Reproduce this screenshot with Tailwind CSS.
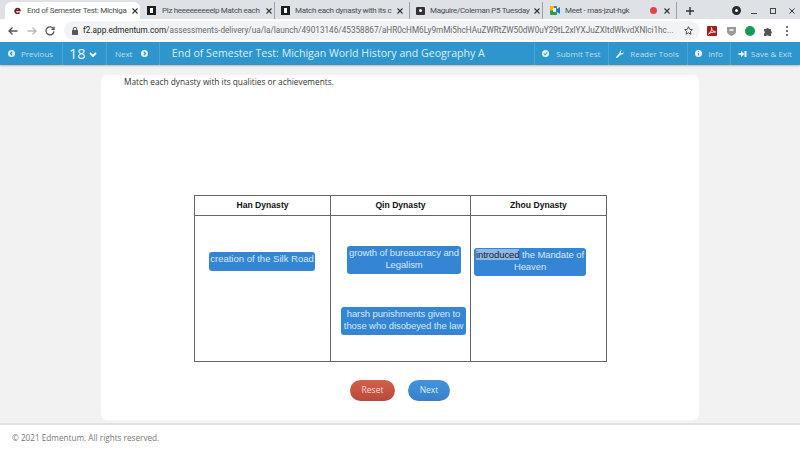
<!DOCTYPE html>
<html><head><meta charset="utf-8"><script src="https://cdn.jsdelivr.net/npm/@tailwindcss/browser@4"></script></head>
<body class="m-0 w-[800px] h-[450px] overflow-hidden bg-white font-['Open_Sans',sans-serif]">
<div class="flex flex-col h-[450px]">
  <!-- tabs -->
  <div class="h-[19px] bg-[#dee1e6] flex items-end text-[8px] tracking-[-0.3px] text-[#4a4d51] font-['Roboto',sans-serif] shrink-0">
    <div class="w-[5px]"></div>
    <div class="w-[135px] h-[17px] bg-white rounded-t-md flex items-center pl-[9px] pr-[5px] gap-[6px]">
      <svg class="w-[7px] h-[7px] shrink-0" viewBox="0 0 7 7" fill="none" stroke="#6d1c28" stroke-width="1.6"><path d="M1 3.500h5A2.500 2.500 0 1 0 5.500 5.500"/></svg>
      <span class="flex-1 whitespace-nowrap">End of Semester Test: Michiga</span>
      <svg class="w-[6px] h-[6px] shrink-0" viewBox="0 0 6 6" stroke="#333" stroke-width="1.1"><path d="M.5.5l5 5M5.500.5l-5 5"/></svg>
    </div>
    <div class="w-[134px] h-[17px] flex items-center pl-[7px] pr-[6px] gap-[6px]">
      <span class="w-[9px] h-[9px] bg-[#1d1d1d] shrink-0 flex items-center justify-center"><span class="w-[3px] h-[5px] bg-white"></span></span>
      <span class="flex-1 whitespace-nowrap">Plz heeeeeeeeelp Match each</span>
      <svg class="w-[6px] h-[6px] shrink-0" viewBox="0 0 6 6" stroke="#333" stroke-width="1.1"><path d="M.5.5l5 5M5.500.5l-5 5"/></svg>
    </div>
    <div class="w-[135px] h-[17px] flex items-center pl-[6px] pr-[6px] gap-[5px] border-l border-[#9aa0a6]">
      <span class="w-[9px] h-[9px] bg-[#1d1d1d] shrink-0 flex items-center justify-center"><span class="w-[3px] h-[5px] bg-white"></span></span>
      <span class="flex-1 whitespace-nowrap">Match each dynasty with its c</span>
      <svg class="w-[6px] h-[6px] shrink-0" viewBox="0 0 6 6" stroke="#333" stroke-width="1.1"><path d="M.5.5l5 5M5.500.5l-5 5"/></svg>
    </div>
    <div class="w-[133px] h-[17px] flex items-center pl-[6px] pr-[6px] gap-[5px] border-l border-[#9aa0a6]">
      <span class="w-[9px] h-[8px] bg-[#333] rounded-[1px] shrink-0 flex items-center justify-center"><span class="w-[3px] h-[3px] bg-white rounded-full"></span></span>
      <span class="flex-1 whitespace-nowrap">Maguire/Coleman P5 Tuesday</span>
      <svg class="w-[6px] h-[6px] shrink-0" viewBox="0 0 6 6" stroke="#333" stroke-width="1.1"><path d="M.5.5l5 5M5.500.5l-5 5"/></svg>
    </div>
    <div class="w-[135px] h-[17px] flex items-center pl-[7px] pr-[6px] gap-[5px] border-l border-r border-[#9aa0a6]">
      <svg class="w-[10px] h-[9px] shrink-0" viewBox="0 0 10 9"><rect width="7" height="9" rx="1" fill="#2a9d4e"/><rect width="4" height="4.500" fill="#f4b400"/><rect x="3" y="2" width="3" height="4" fill="#fff"/><path d="M7 3l3-2v7L7 6z" fill="#1a73e8"/></svg>
      <span class="flex-1 whitespace-nowrap">Meet - mas-jzut-hgk</span>
      <span class="w-[7px] h-[7px] rounded-full bg-[#e0454b] shrink-0"></span>
      <svg class="w-[6px] h-[6px] ml-[2px] shrink-0" viewBox="0 0 6 6" stroke="#333" stroke-width="1.1"><path d="M.5.5l5 5M5.500.5l-5 5"/></svg>
    </div>
    <div class="flex-1 h-[17px] flex items-center pl-[9px]">
      <svg class="w-[8px] h-[8px] shrink-0" viewBox="0 0 8 8" stroke="#333" stroke-width="1.4"><path d="M4 0v8M0 4h8"/></svg>
      <span class="ml-[38px] w-[9px] h-[9px] rounded-full border-[3px] border-[#2b2b2b] bg-white shrink-0"></span>
      <span class="ml-[10px] w-[6px] h-[1.5px] mt-[6px] bg-[#444] shrink-0"></span>
      <span class="ml-[13px] w-[6px] h-[6px] border border-[#444] shrink-0"></span>
      <svg class="ml-[13px] w-[6px] h-[6px] shrink-0" viewBox="0 0 6 6" stroke="#333" stroke-width="1"><path d="M.5.5l5 5M5.500.5l-5 5"/></svg>
    </div>
  </div>
  <!-- toolbar -->
  <div class="h-[23px] bg-white flex items-center shrink-0">
    <svg class="w-[10px] h-[10px] ml-[8px] shrink-0" viewBox="0 0 10 10" fill="none" stroke="#555" stroke-width="1.300"><path d="M9.500 5H1M4.500 1.500 1 5l3.500 3.500"/></svg>
    <svg class="w-[10px] h-[10px] ml-[9px] shrink-0" viewBox="0 0 10 10" fill="none" stroke="#b4b6b9" stroke-width="1.300"><path d="M.5 5H9M5.500 1.500 9 5 5.500 8.500"/></svg>
    <svg class="w-[10px] h-[10px] ml-[8px] shrink-0" viewBox="0 0 10 10" fill="none" stroke="#555" stroke-width="1.300"><path d="M8.600 3A4 4 0 1 0 9 5.400"/><path d="M9 .8V3.400H6.400"/></svg>
    <div class="ml-[9px] h-[19px] w-[636px] shrink-0 rounded-full bg-[#f1f3f4] flex items-center pl-[8px] pr-[7px] text-[8.2px] font-['Roboto',sans-serif] whitespace-nowrap overflow-hidden">
      <svg class="w-[6px] h-[8px] shrink-0" viewBox="0 0 6 8"><rect y="3" width="6" height="5" rx=".7" fill="#555"/><path d="M1.300 3.500V2a1.700 1.700 0 0 1 3.400 0v1.500" fill="none" stroke="#555"/></svg>
      <span class="ml-[5px] text-[#222]">f2.app.edmentum.com</span><span class="text-[#66696d] flex-1 overflow-hidden">/assessments-delivery/ua/la/launch/49013146/45358867/aHR0cHM6Ly9mMi5hcHAuZWRtZW50dW0uY29tL2xlYXJuZXItdWkvdXNlci1hc...</span>
      <svg class="w-[9px] h-[9px] ml-[8px] shrink-0" viewBox="0 0 10 10" fill="none" stroke="#444"><path d="M5 .8l1.300 2.800 3 .4-2.200 2.100.6 3L5 7.600 2.300 9.100l.6-3L.7 4l3-.4z"/></svg>
    </div>
    <svg class="ml-[7px] w-[10px] h-[10px] shrink-0" viewBox="0 0 10 10"><rect width="10" height="10" rx="1" fill="#a81c1c"/><path d="M1.500 8C4 6.500 5 3.500 4.500 1.500 4.500 4 6.500 6 8.500 6 6 6 3.500 6.500 1.500 8z" fill="none" stroke="#fff" stroke-width=".9"/></svg>
    <svg class="ml-[10px] w-[9px] h-[10px] shrink-0" viewBox="0 0 9 10"><path d="M0 1h9v4.500C9 8 6 9.500 4.500 10 3 9.500 0 8 0 5.500z" fill="#9a9a9a"/><rect x="2.500" y="3" width="4" height="2" fill="#e8e8e8"/></svg>
    <span class="ml-[9px] w-[10px] h-[10px] rounded-full bg-[#159a57] shrink-0"></span>
    <svg class="ml-[8px] w-[10px] h-[10px] shrink-0" viewBox="0 0 10 10" fill="#555"><path d="M1 3h2.300a1.300 1.300 0 0 1 2.500 0H8v2.300a1.300 1.300 0 0 1 0 2.500V10H5.600a1.300 1.300 0 0 0-2.400 0H1V7.500a1.300 1.300 0 0 0 0-2.400z"/></svg>
    <span class="ml-[13px] flex flex-col gap-[2px] shrink-0"><i class="block w-[2px] h-[2px] rounded-full bg-[#444]"></i><i class="block w-[2px] h-[2px] rounded-full bg-[#444]"></i><i class="block w-[2px] h-[2px] rounded-full bg-[#444]"></i></span>
  </div>
  <!-- blue bar -->
  <div class="h-[23px] bg-[#2f96cd] flex items-stretch shrink-0 shadow-[0_1px_2px_rgba(0,0,0,0.25)] relative z-10 text-[8px] text-[#bfdff0] whitespace-nowrap">
    <div class="w-[63px] flex items-center pl-[8px] gap-[6px] border-r border-[#4aa5d6]">
      <svg class="w-[7px] h-[7px] shrink-0" viewBox="0 0 8 8"><circle cx="4" cy="4" r="4" fill="#dcecf5"/><path d="M4.800 2 2.800 4l2 2" fill="none" stroke="#2f96cd" stroke-width="1.300"/></svg>Previous
    </div>
    <div class="w-[44px] flex items-center pl-[6px] border-r border-[#4aa5d6] text-[#eaf5fb] text-[14.5px] gap-[3px]">18<svg class="w-[8px] h-[6px] mt-[3px]" viewBox="0 0 8 6" fill="none" stroke="#fff" stroke-width="1.800"><path d="M1 1l3 3 3-3"/></svg></div>
    <div class="w-[53px] flex items-center pl-[8px] gap-[9px] border-r border-[#4aa5d6]">Next
      <svg class="w-[7px] h-[7px] shrink-0" viewBox="0 0 8 8"><circle cx="4" cy="4" r="4" fill="#eaf5fb"/><path d="M3.200 2l2 2-2 2" fill="none" stroke="#2f96cd" stroke-width="1.300"/></svg>
    </div>
    <div class="w-[375px] flex items-center pl-[12px] text-[10.6px] text-[#dbeef8]">End of Semester Test: Michigan World History and Geography A</div>
    <div class="w-[74px] flex items-center pl-[7px] gap-[7px] border-l border-[#4aa5d6]">
      <svg class="w-[7px] h-[7px] shrink-0" viewBox="0 0 8 8"><circle cx="4" cy="4" r="4" fill="#eaf5fb"/><path d="M2 4l1.500 1.500L6 2.800" fill="none" stroke="#2f96cd" stroke-width="1.200"/></svg>Submit Test</div>
    <div class="w-[79px] flex items-center pl-[7px] gap-[6px] border-l border-[#4aa5d6]">
      <svg class="w-[8px] h-[8px] shrink-0" viewBox="0 0 8 8"><path d="M7.800 2A2.300 2.300 0 0 1 4.800 4.400L1.500 7.700a.8.8 0 0 1-1.200-1.200L3.600 3.200A2.300 2.300 0 0 1 6 .2L4.700 1.500l.3 1.500 1.500.3z" fill="#eaf5fb"/></svg>Reader Tools</div>
    <div class="w-[43px] flex items-center pl-[7px] gap-[6px] border-l border-[#4aa5d6]">
      <svg class="w-[7px] h-[7px] shrink-0" viewBox="0 0 8 8"><circle cx="4" cy="4" r="4" fill="#eaf5fb"/><path d="M4 3.400V6.400M4 1.500v1.100" stroke="#2f96cd" stroke-width="1.300"/></svg>Info</div>
    <div class="w-[70px] flex items-center pl-[7px] gap-[4px] border-l border-[#4aa5d6]">
      <svg class="w-[9px] h-[8px] shrink-0" viewBox="0 0 8 8" fill="#eaf5fb"><path d="M0 3h2.500V1L6 4 2.500 7V5H0z"/><rect x="6" y="1" width="2" height="6" rx=".5"/></svg>Save &amp; Exit</div>
  </div>
  <!-- body -->
  <div class="h-[360px] bg-[#f2f2f2] pt-[10px] pl-[101px] shrink-0 border-b-2 border-[#e2e2e2]">
    <div class="w-[598px] h-[345px] bg-white rounded-md pl-[23px] pt-[1px]">
      <p class="text-[8.3px] leading-[12px] text-[#333]">Match each dynasty with its qualities or achievements.</p>
      <div class="ml-[70px] mt-[107px] w-[413px] h-[167px] border border-[#666] grid grid-cols-[136px_140px_1fr] grid-rows-[20px_1fr] font-['Liberation_Sans',sans-serif]">
        <div class="border-r border-b border-[#666] flex items-center justify-center text-[8.6px] font-bold text-[#111]">Han Dynasty</div>
        <div class="border-r border-b border-[#666] flex items-center justify-center text-[8.6px] font-bold text-[#111]">Qin Dynasty</div>
        <div class="border-b border-[#666] flex items-center justify-center text-[8.6px] font-bold text-[#111]">Zhou Dynasty</div>
        <div class="border-r border-[#666] flex flex-col items-start pl-[14px] pt-[36px]">
          <div class="w-[106px] h-[19px] bg-[#3485d4] rounded-[3px] text-[#d7e8f7] text-[9.5px] leading-[13px] text-center whitespace-nowrap">creation of the Silk Road</div>
        </div>
        <div class="border-r border-[#666] flex flex-col items-start pl-[10px] pt-[30px]">
          <div class="ml-[6px] w-[114px] h-[28px] bg-[#3485d4] rounded-[3px] text-[#d7e8f7] text-[9.5px] tracking-[-0.1px] leading-[12px] pt-[1px] text-center">growth of bureaucracy and Legalism</div>
          <div class="w-[125px] h-[28px] mt-[33px] bg-[#3485d4] rounded-[3px] text-[#d7e8f7] text-[9.5px] tracking-[-0.1px] leading-[12px] pt-[1px] text-center">harsh punishments given to those who disobeyed the law</div>
        </div>
        <div class="flex flex-col items-start pl-[3px] pt-[32px]">
          <div class="w-[112px] h-[28px] bg-[#3485d4] rounded-[3px] text-[#d7e8f7] text-[9.5px] tracking-[-0.1px] leading-[12px] pt-[1px] text-center"><span class="bg-[#8fb7e2] text-[#12233a]">introduced</span> the Mandate of Heaven</div>
        </div>
      </div>
      <div class="ml-[226px] mt-[18px] flex gap-[13px] text-[8.5px]">
        <div class="w-[45px] h-[21px] rounded-full bg-linear-to-b from-[#d35f48] to-[#b9493a] text-[#f3dcd7] flex items-center justify-center">Reset</div>
        <div class="w-[42px] h-[21px] rounded-full bg-linear-to-b from-[#4394dc] to-[#3580cb] text-[#dcebf9] flex items-center justify-center">Next</div>
      </div>
    </div>
  </div>
  <!-- footer -->
  <div class="flex-1 bg-white pl-[12px] pt-[7px] text-[8.2px] text-[#777]">© 2021 Edmentum. All rights reserved.</div>
</div>
</body></html>
